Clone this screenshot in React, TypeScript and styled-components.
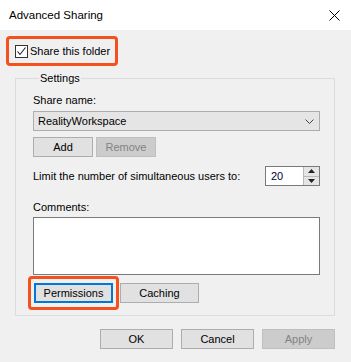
import React from 'react';
import styled, { createGlobalStyle } from 'styled-components';

const GlobalStyle = createGlobalStyle`
  html, body {
    margin: 0;
    padding: 0;
    background: #f0f0f0;
  }
  body {
    font-family: "Liberation Sans", Arial, sans-serif;
    font-size: 11px;
    line-height: 14px;
    color: #000;
    white-space: nowrap;
  }
`;

const Dialog = styled.div`
  width: 351px;
  height: 362px;
  display: flex;
  flex-direction: column;
  background: #f0f0f0;
  overflow: hidden;
`;

const TitleBar = styled.div`
  height: 30px;
  flex: none;
  display: flex;
  align-items: center;
  justify-content: space-between;
  padding: 0 11px 0 9px;
  background: #ffffff;
`;

const Title = styled.span`
  font-size: 11.5px;
  margin-top: -1px;
`;

const Body = styled.div`
  display: flex;
  flex-direction: column;
  padding: 6px 0 0 6px;
`;

// Marca laranja em volta de um controle
const Highlight = styled.div`
  display: flex;
  align-items: center;
  box-sizing: border-box;
  border: 3px solid #f4511e;
  border-radius: 4px;
`;

const CheckHighlight = styled(Highlight)`
  width: 112px;
  height: 30px;
  padding-left: 6px;
  gap: 2px;
`;

const Box = styled.span`
  width: 13px;
  height: 13px;
  box-sizing: border-box;
  border: 1px solid #333333;
  background: #ffffff;
  display: flex;
  align-items: center;
  justify-content: center;
`;

const Group = styled.fieldset`
  margin: 6px 16px 0 9px;
  padding: 2px 14px 5px 17px;
  border: 1px solid #dcdcdc;
  display: flex;
  flex-direction: column;
  min-width: 0;
`;

const Legend = styled.legend`
  padding: 0 1px;
  margin-left: 6px;
  line-height: 12px;
`;

const Label = styled.div<{ $top?: number }>`
  margin-top: ${(p) => p.$top ?? 0}px;
  line-height: 16px;
`;

const Combo = styled.div`
  margin-top: 3px;
  height: 20px;
  box-sizing: border-box;
  border: 1px solid #adadad;
  background: #e5e5e5;
  display: flex;
  align-items: center;
  justify-content: space-between;
  padding: 0 5px 0 4px;
`;

const Row = styled.div<{ $top?: number; $gap?: number }>`
  display: flex;
  align-items: center;
  margin-top: ${(p) => p.$top ?? 0}px;
  gap: ${(p) => p.$gap ?? 0}px;
`;

const Button = styled.div<{ $w?: number; $disabled?: boolean; $focused?: boolean }>`
  width: ${(p) => p.$w ?? 60}px;
  height: 20px;
  box-sizing: border-box;
  display: flex;
  align-items: center;
  justify-content: center;
  background: ${(p) => (p.$disabled ? '#cccccc' : '#e1e1e1')};
  border: ${(p) => (p.$focused ? '2px solid #0078d7' : p.$disabled ? '1px solid #bfbfbf' : '1px solid #adadad')};
  color: ${(p) => (p.$disabled ? '#838383' : '#000')};
`;

const Spin = styled.div`
  margin-left: auto;
  width: 55px;
  height: 20px;
  box-sizing: border-box;
  border: 1px solid #7a7a7a;
  background: #ffffff;
  display: flex;
`;

const SpinValue = styled.span`
  flex: 1;
  padding-left: 5px;
  display: flex;
  align-items: center;
  color: #000033;
`;

const SpinArrows = styled.div`
  width: 15px;
  display: flex;
  flex-direction: column;
  border-left: 1px solid #b8b8b8;
  background: #e5e5e5;
`;

const SpinHalf = styled.div<{ $bottom?: boolean }>`
  flex: 1;
  display: flex;
  align-items: center;
  justify-content: center;
  border-top: ${(p) => (p.$bottom ? '1px solid #b8b8b8' : 'none')};
`;

const TextArea = styled.div`
  margin-top: 2px;
  height: 58px;
  box-sizing: border-box;
  border: 1px solid #7a7a7a;
  background: #ffffff;
`;

const PermHighlight = styled(Highlight)`
  width: 91px;
  height: 34px;
  margin-left: -5px;
  justify-content: center;
`;

const Footer = styled.div`
  display: flex;
  justify-content: flex-end;
  gap: 8px;
  margin: 13px 16px 0 0;
`;

const Chevron = () => (
  <svg width="9" height="5" viewBox="0 0 9 5">
    <path d="M0.5 0.5 L4.5 4.5 L8.5 0.5" fill="none" stroke="#444" strokeWidth="1" />
  </svg>
);

const CloseIcon = () => (
  <svg width="11" height="11" viewBox="0 0 11 11">
    <path d="M0.5 0.5 L10.5 10.5 M10.5 0.5 L0.5 10.5" stroke="#000" strokeWidth="1" />
  </svg>
);

const Tick = () => (
  <svg width="11" height="11" viewBox="0 0 11 11">
    <path d="M1.5 5.5 L4 8.5 L9.5 1.5" fill="none" stroke="#222" strokeWidth="1.1" />
  </svg>
);

const Arrow = ({ up }: { up?: boolean }) => (
  <svg width="7" height="4" viewBox="0 0 7 4">
    <path d={up ? 'M0 4 L3.5 0 L7 4 Z' : 'M0 0 L3.5 4 L7 0 Z'} fill="#222" />
  </svg>
);

const App: React.FC = (): JSX.Element => {
  return (
    <>
      <GlobalStyle />
      <Dialog>
        <TitleBar>
          <Title>Advanced Sharing</Title>
          <CloseIcon />
        </TitleBar>
        <Body>
          <CheckHighlight>
            <Box>
              <Tick />
            </Box>
            <span>Share this folder</span>
          </CheckHighlight>

          <Group>
            <Legend>Settings</Legend>
            <Label $top={6}>Share name:</Label>
            <Combo>
              <span>RealityWorkspace</span>
              <Chevron />
            </Combo>
            <Row $top={6} $gap={3}>
              <Button $w={60}>Add</Button>
              <Button $w={60} $disabled>
                Remove
              </Button>
            </Row>
            <Row $top={9}>
              <span>Limit the number of simultaneous users to:</span>
              <Spin>
                <SpinValue>20</SpinValue>
                <SpinArrows>
                  <SpinHalf>
                    <Arrow up />
                  </SpinHalf>
                  <SpinHalf $bottom>
                    <Arrow />
                  </SpinHalf>
                </SpinArrows>
              </Spin>
            </Row>
            <Label $top={13}>Comments:</Label>
            <TextArea />
            <Row $top={1} $gap={1}>
              <PermHighlight>
                <Button $w={79} $focused>
                  Permissions
                </Button>
              </PermHighlight>
              <Button $w={79}>Caching</Button>
            </Row>
          </Group>

          <Footer>
            <Button $w={73}>OK</Button>
            <Button $w={73}>Cancel</Button>
            <Button $w={73} $disabled>
              Apply
            </Button>
          </Footer>
        </Body>
      </Dialog>
    </>
  );
};

export default App;
